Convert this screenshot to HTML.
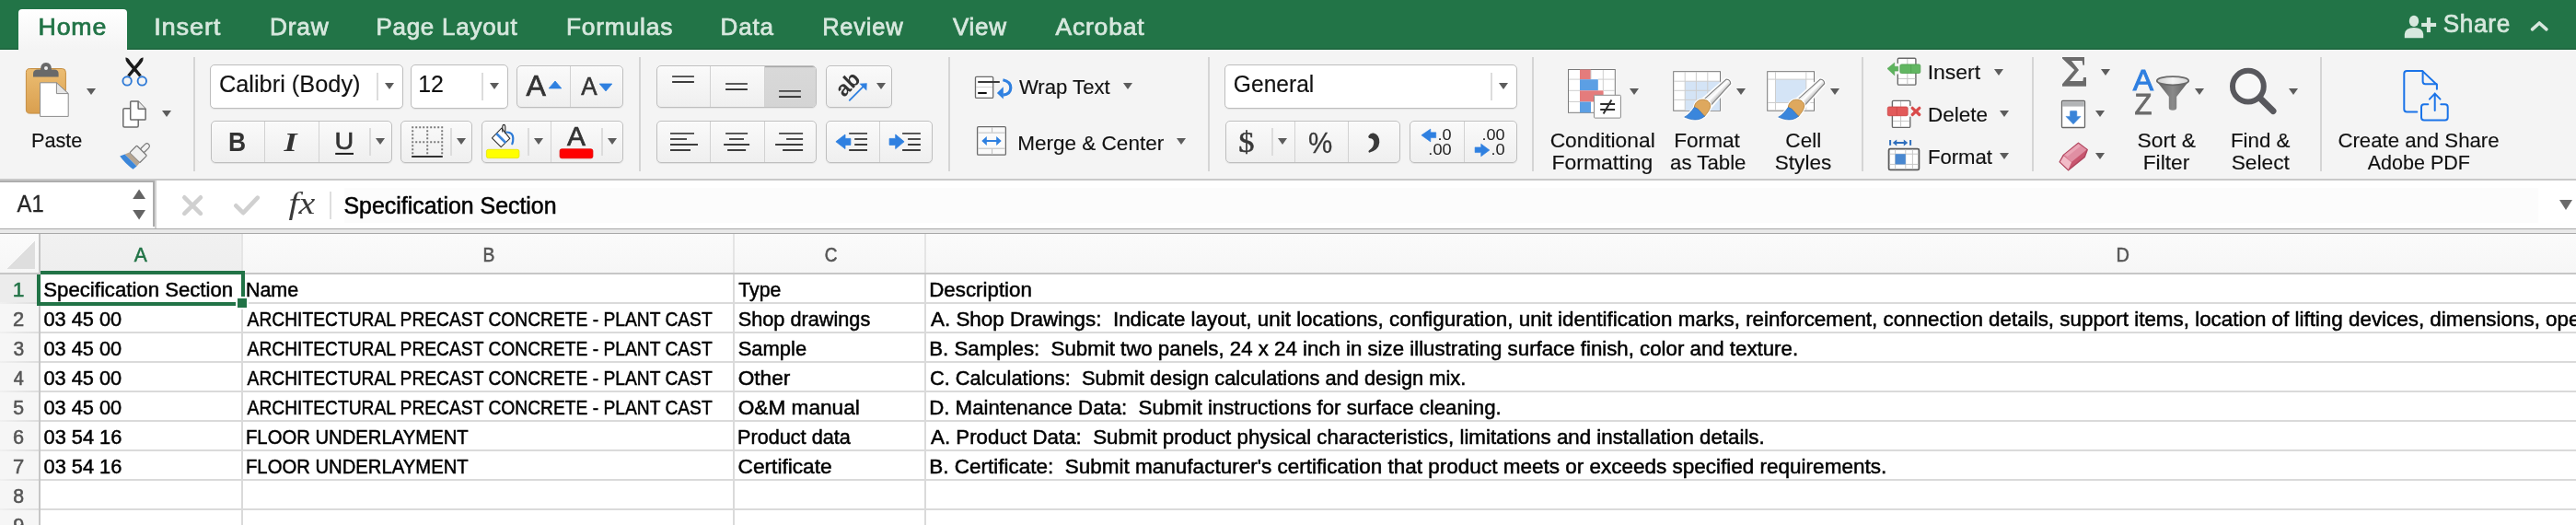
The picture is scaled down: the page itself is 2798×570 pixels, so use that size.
<!DOCTYPE html>
<html><head><meta charset="utf-8">
<style>
*{box-sizing:border-box;margin:0;padding:0}
html,body{width:2798px;height:570px;overflow:hidden;background:#fff;font-family:"Liberation Sans",sans-serif;position:relative}
.a{position:absolute}
.sep{position:absolute;width:2px;background:#d5d5d5;top:62px;height:124px}
.grp{position:absolute;border:1px solid #bebebe;border-radius:5px;background:linear-gradient(#fafafa,#efefef);box-shadow:inset 0 1px 0 #fff,0 1px 1px rgba(0,0,0,0.07)}
.dd{position:absolute;border:1px solid #bdbdbd;border-radius:5px;background:#fff;box-shadow:0 1px 1px rgba(0,0,0,0.07)}
.dv{position:absolute;top:0;bottom:0;width:1px;background:#d2d2d2}
.is{position:absolute;width:2px;background:#dcdcdc}
.ar{position:absolute;width:0;height:0;border-left:5px solid transparent;border-right:5px solid transparent;border-top:7px solid #5c5c5c}
.gl{position:absolute;background:#dadada}
</style></head><body>

<!-- green title/tab bar -->
<div class="a" style="left:0;top:0;width:2798px;height:54px;background:#227447"></div>
<div class="a" style="left:0;top:52px;width:2798px;height:2px;background:#1f6a41"></div>
<div class="a" style="left:20px;top:10px;width:118px;height:44px;background:linear-gradient(#ffffff,#f4f4f4);border-radius:4px 4px 0 0"></div>

<!-- ribbon -->
<div class="a" style="left:0;top:54px;width:2798px;height:140px;background:#f4f4f4"></div>
<div class="a" style="left:0;top:194px;width:2798px;height:2px;background:#c9c9c9"></div>
<div class="sep" style="left:210px"></div>
<div class="sep" style="left:694px"></div>
<div class="sep" style="left:1030px"></div>
<div class="sep" style="left:1312px"></div>
<div class="sep" style="left:1664px"></div>
<div class="sep" style="left:2022px"></div>
<div class="sep" style="left:2207px"></div>
<div class="sep" style="left:2520px"></div>

<div class="ar" style="left:94px;top:96px"></div>
<div class="ar" style="left:176px;top:120px"></div>
<!-- font group -->
<div class="dd" style="left:228px;top:70px;width:210px;height:48px"><div class="is" style="left:180px;top:8px;height:30px"></div></div>
<div class="ar" style="left:418px;top:90px"></div>
<div class="dd" style="left:446px;top:70px;width:106px;height:48px"><div class="is" style="left:76px;top:8px;height:30px"></div></div>
<div class="ar" style="left:532px;top:90px"></div>
<div class="grp" style="left:561px;top:71px;width:116px;height:46px"><div class="dv" style="left:57px"></div></div>

<div class="grp" style="left:229px;top:131px;width:197px;height:46px"><div class="dv" style="left:57px"></div><div class="dv" style="left:116px"></div><div class="is" style="left:171px;top:7px;height:30px"></div></div>
<div class="ar" style="left:408px;top:150px"></div>
<div class="grp" style="left:435px;top:131px;width:78px;height:46px"><div class="is" style="left:53px;top:7px;height:30px"></div></div>
<div class="ar" style="left:496px;top:150px"></div>
<div class="grp" style="left:523px;top:131px;width:154px;height:46px"><div class="is" style="left:49px;top:7px;height:30px"></div><div class="dv" style="left:74px"></div><div class="is" style="left:129px;top:7px;height:30px"></div></div>
<div class="ar" style="left:580px;top:150px"></div>
<div class="ar" style="left:660px;top:150px"></div>

<!-- alignment group -->
<div class="grp" style="left:713px;top:71px;width:174px;height:46px;overflow:hidden"><div class="a" style="left:116px;top:0;width:58px;height:46px;background:linear-gradient(#d9d9d9,#d4d4d4);box-shadow:inset 0 1px 1px rgba(0,0,0,0.25)"></div><div class="dv" style="left:57px"></div><div class="dv" style="left:116px"></div></div>
<div class="grp" style="left:897px;top:71px;width:72px;height:46px"></div>
<div class="ar" style="left:952px;top:90px"></div>
<div class="grp" style="left:713px;top:131px;width:174px;height:46px"><div class="dv" style="left:57px"></div><div class="dv" style="left:116px"></div></div>
<div class="grp" style="left:897px;top:131px;width:116px;height:46px"><div class="dv" style="left:57px"></div></div>

<div class="ar" style="left:1220px;top:90px"></div>
<div class="ar" style="left:1278px;top:150px"></div>

<!-- number group -->
<div class="dd" style="left:1330px;top:70px;width:318px;height:48px"><div class="is" style="left:288px;top:8px;height:30px"></div></div>
<div class="ar" style="left:1628px;top:90px"></div>
<div class="grp" style="left:1331px;top:131px;width:190px;height:46px"><div class="is" style="left:49px;top:7px;height:30px"></div><div class="dv" style="left:74px"></div><div class="dv" style="left:132px"></div></div>
<div class="ar" style="left:1388px;top:150px"></div>
<div class="grp" style="left:1531px;top:131px;width:117px;height:46px"><div class="dv" style="left:58px"></div></div>

<!-- styles group arrows -->
<div class="ar" style="left:1770px;top:96px"></div>
<div class="ar" style="left:1886px;top:96px"></div>
<div class="ar" style="left:1988px;top:96px"></div>
<!-- cells group arrows -->
<div class="ar" style="left:2166px;top:75px"></div>
<div class="ar" style="left:2172px;top:120px"></div>
<div class="ar" style="left:2172px;top:166px"></div>
<!-- editing arrows -->
<div class="ar" style="left:2282px;top:75px"></div>
<div class="ar" style="left:2276px;top:120px"></div>
<div class="ar" style="left:2276px;top:166px"></div>
<div class="ar" style="left:2384px;top:96px"></div>
<div class="ar" style="left:2486px;top:96px"></div>

<!-- formula bar -->
<div class="a" style="left:0;top:196px;width:2798px;height:52px;background:#fff"></div>
<div class="a" style="left:374px;top:204px;width:2383px;height:38px;background:#fcfcfc"></div>
<div class="a" style="left:166px;top:196px;width:2px;height:50px;background:#acacac"></div>
<div class="a" style="left:168px;top:196px;width:2px;height:52px;background:#d2d2d2"></div>
<div class="a" style="left:0;top:248px;width:2798px;height:1px;background:#a9a9a9"></div>
<div class="a" style="left:0;top:249px;width:2798px;height:4px;background:#e9e9e9"></div>
<div class="a" style="left:0;top:253px;width:2798px;height:1px;background:#a9a9a9"></div>
<div class="a" style="left:0;top:196px;width:166px;height:2px;background:#adadad"></div>
<div class="a" style="left:358px;top:208px;width:2px;height:30px;background:#dedede"></div>
<div class="a" style="left:2780px;top:217px;width:0;height:0;border-left:7px solid transparent;border-right:7px solid transparent;border-top:11px solid #6a6a6a"></div>

<!-- column headers -->
<div class="a" style="left:0;top:254px;width:2798px;height:42px;background:linear-gradient(#fbfbfb,#f6f6f6)"></div>
<div class="a" style="left:44px;top:254px;width:218px;height:42px;background:linear-gradient(#f1f1f1,#eeeeee)"></div>
<div class="a" style="left:262px;top:254px;width:2px;height:42px;background:#e5e5e5"></div>
<div class="a" style="left:796px;top:254px;width:2px;height:42px;background:#e5e5e5"></div>
<div class="a" style="left:1004px;top:254px;width:2px;height:42px;background:#e5e5e5"></div>
<div class="a" style="left:0;top:296px;width:2798px;height:2px;background:#c6c6c6"></div>
<div class="a" style="left:0;top:298px;width:42px;height:272px;background:#f6f6f6"></div>
<div class="a" style="left:0;top:298px;width:42px;height:30px;background:#ececec"></div>
<div class="a" style="left:42px;top:254px;width:2px;height:316px;background:#c6c6c6"></div>
<div class="a" style="left:8px;top:262px;width:30px;height:30px;background:linear-gradient(to bottom right,transparent 50%,#dedede 50%)"></div>

<!-- grid -->
<div class="gl" style="left:262px;top:298px;width:2px;height:272px"></div>
<div class="gl" style="left:796px;top:298px;width:2px;height:272px"></div>
<div class="gl" style="left:1004px;top:298px;width:2px;height:272px"></div>
<div class="gl" style="left:44px;top:328px;width:2754px;height:2px"></div>
<div class="gl" style="left:44px;top:360px;width:2754px;height:2px"></div>
<div class="gl" style="left:44px;top:392px;width:2754px;height:2px"></div>
<div class="gl" style="left:44px;top:424px;width:2754px;height:2px"></div>
<div class="gl" style="left:44px;top:456px;width:2754px;height:2px"></div>
<div class="gl" style="left:44px;top:488px;width:2754px;height:2px"></div>
<div class="gl" style="left:44px;top:520px;width:2754px;height:2px"></div>
<div class="gl" style="left:44px;top:552px;width:2754px;height:2px"></div>
<div class="a" style="left:0;top:328px;width:42px;height:2px;background:linear-gradient(to right,#f0f0f0,#dedede)"></div>
<div class="a" style="left:0;top:360px;width:42px;height:2px;background:linear-gradient(to right,#f0f0f0,#dedede)"></div>
<div class="a" style="left:0;top:392px;width:42px;height:2px;background:linear-gradient(to right,#f0f0f0,#dedede)"></div>
<div class="a" style="left:0;top:424px;width:42px;height:2px;background:linear-gradient(to right,#f0f0f0,#dedede)"></div>
<div class="a" style="left:0;top:456px;width:42px;height:2px;background:linear-gradient(to right,#f0f0f0,#dedede)"></div>
<div class="a" style="left:0;top:488px;width:42px;height:2px;background:linear-gradient(to right,#f0f0f0,#dedede)"></div>
<div class="a" style="left:0;top:520px;width:42px;height:2px;background:linear-gradient(to right,#f0f0f0,#dedede)"></div>
<div class="a" style="left:0;top:552px;width:42px;height:2px;background:linear-gradient(to right,#f0f0f0,#dedede)"></div>

<!-- selection -->
<div class="a" style="left:44px;top:294px;width:222px;height:4px;background:#217346"></div>
<div class="a" style="left:40px;top:298px;width:4px;height:34px;background:#217346"></div>
<div class="a" style="left:262px;top:294px;width:4px;height:28px;background:#217346"></div>
<div class="a" style="left:40px;top:328px;width:216px;height:4px;background:#217346"></div>
<div class="a" style="left:256px;top:322px;width:14px;height:14px;background:#fff"></div>
<div class="a" style="left:258px;top:324px;width:10px;height:10px;background:#217346"></div>

<svg class="a" style="left:0;top:0" width="2798" height="570">
<defs>
<linearGradient id="gClip" x1="0" y1="0" x2="0" y2="1"><stop offset="0" stop-color="#ecbd72"/><stop offset="1" stop-color="#d99f4f"/></linearGradient>
<linearGradient id="gFun" x1="0" y1="0" x2="1" y2="0"><stop offset="0" stop-color="#5e5e5e"/><stop offset="0.5" stop-color="#8a8a8a"/><stop offset="1" stop-color="#5e5e5e"/></linearGradient>
<linearGradient id="gEll" x1="0" y1="0" x2="1" y2="0"><stop offset="0" stop-color="#cfcfcf"/><stop offset="0.5" stop-color="#f4f4f4"/><stop offset="1" stop-color="#d6d6d6"/></linearGradient>
<linearGradient id="gHandleV" x1="0" y1="0" x2="0" y2="1"><stop offset="0" stop-color="#e8e8e8"/><stop offset="0.45" stop-color="#ffffff"/><stop offset="1" stop-color="#b5b5b5"/></linearGradient>
<linearGradient id="gHandle" x1="0" y1="0" x2="1" y2="0"><stop offset="0" stop-color="#bdbdbd"/><stop offset="0.5" stop-color="#fafafa"/><stop offset="1" stop-color="#c8c8c8"/></linearGradient>
</defs>

<!-- Share person icon + chevron -->
<g fill="#d7e8de">
<ellipse cx="2622" cy="22.9" rx="5.2" ry="6.1"/>
<path d="M2611.8,41.2 L2611.8,37 Q2612.5,30 2622,30 Q2631.5,30 2632.2,37 L2632.2,41.2 Z"/>
<rect x="2630.1" y="24.9" width="16" height="4.1"/>
<rect x="2635.9" y="19" width="4.1" height="16.1"/>
</g>
<polyline points="2750.5,31.8 2758.2,25 2765.9,31.8" fill="none" stroke="#d7e8de" stroke-width="3.6" stroke-linecap="round" stroke-linejoin="round"/>

<!-- Paste clipboard -->
<rect x="28.4" y="74.5" width="43" height="48.6" rx="4" fill="url(#gClip)" stroke="#c58d42" stroke-width="1"/>
<path d="M36,83.6 L36,80 Q36,75.5 41,75.5 L44,75.5 Q44,68 50,68 Q56,68 56,75.5 L59,75.5 Q63.6,75.5 63.6,80 L63.6,83.6 Z" fill="#696969"/>
<circle cx="50" cy="74" r="2" fill="#f0f0f0"/>
<path d="M43.6,89.8 L61.4,89.8 L74.2,101.6 L74.2,126.4 L43.6,126.4 Z" fill="#fff" stroke="#8a8a8a" stroke-width="1"/>
<path d="M61.4,89.8 L61.4,101.6 L74.2,101.6 Z" fill="#e6e6e6" stroke="#8a8a8a" stroke-width="1" stroke-linejoin="round"/>

<!-- Scissors -->
<path d="M136.3,62.6 Q139.5,62.5 141.5,66.5 L153.8,81.6 L151.2,83.6 L138.6,68.8 Q136,65.5 136.3,62.6 Z" fill="#1b1b1b"/>
<path d="M155.7,62.6 Q152.5,62.5 150.5,66.5 L138.2,81.6 L140.8,83.6 L153.4,68.8 Q156,65.5 155.7,62.6 Z" fill="#1b1b1b"/>
<circle cx="138.1" cy="87.9" r="4.7" fill="none" stroke="#2f7ad6" stroke-width="1.9"/>
<circle cx="154.3" cy="87.9" r="4.7" fill="none" stroke="#2f7ad6" stroke-width="1.9"/>

<!-- Copy -->
<rect x="133.8" y="117.7" width="16.4" height="20.4" rx="1.5" fill="#fff" stroke="#6b6b6b" stroke-width="1.5"/>
<path d="M142.8,109.9 L150.1,109.9 L158.1,118.2 L158.1,129.3 Q158.1,130.1 157.3,130.1 L142.5,130.1 Q141.7,130.1 141.7,129.3 L141.7,110.7 Q141.7,109.9 142.5,109.9 Z" fill="#fff" stroke="#6b6b6b" stroke-width="1.5"/>
<path d="M150.1,109.9 L150.1,117.4 Q150.1,118.2 150.9,118.2 L158.1,118.2" fill="#ececec" stroke="#6b6b6b" stroke-width="1.5"/>

<!-- Format painter -->
<g transform="translate(147.6,168.4) rotate(45)">
<rect x="-1.3" y="-18.2" width="5.6" height="11.5" rx="2.8" fill="#f2f2f2" stroke="#7a7a7a" stroke-width="1.2"/>
<rect x="-6.6" y="-8" width="15.4" height="11" rx="1" fill="#f0f0f0" stroke="#7a7a7a" stroke-width="1.2"/>
<path d="M-7.2,3 L8.8,3 L9.2,7.8 L-9.2,7.8 Z" fill="#b5a592"/>
<path d="M-9.2,7.8 L9.2,7.8 L8.6,13 Q-2,14.6 -11.6,13 Z" fill="#3b86d9"/>
</g>
<!-- Grow / shrink triangles -->
<path d="M596.2,95.9 L603,88 L609.8,95.9 Z" fill="#2f80e0" stroke="#2f80e0" stroke-width="0.8" stroke-linejoin="round"/>
<path d="M651.2,91 L664.8,91 L658,98.9 Z" fill="#2f80e0" stroke="#2f80e0" stroke-width="0.8" stroke-linejoin="round"/>

<!-- underline bar -->
<rect x="364.2" y="165.9" width="19.8" height="2" fill="#1c1c1c"/>

<!-- borders icon -->
<g fill="#7a7a7a">
<path d="M447.2,137.2 h2 v2 h-2z M451.2,137.2 h2 v2 h-2z M455.2,137.2 h2 v2 h-2z M459.2,137.2 h2 v2 h-2z M463.2,137.2 h2 v2 h-2z M467.2,137.2 h2 v2 h-2z M471.2,137.2 h2 v2 h-2z M475.2,137.2 h2 v2 h-2z M479.2,137.2 h2 v2 h-2z"/>
<path d="M447.2,153.2 h2 v2 h-2z M451.2,153.2 h2 v2 h-2z M455.2,153.2 h2 v2 h-2z M459.2,153.2 h2 v2 h-2z M463.2,153.2 h2 v2 h-2z M467.2,153.2 h2 v2 h-2z M471.2,153.2 h2 v2 h-2z M475.2,153.2 h2 v2 h-2z M479.2,153.2 h2 v2 h-2z"/>
<path d="M447.2,141.2 h2 v2 h-2z M447.2,145.2 h2 v2 h-2z M447.2,149.2 h2 v2 h-2z M447.2,157.2 h2 v2 h-2z M447.2,161.2 h2 v2 h-2z M447.2,165.2 h2 v2 h-2z"/>
<path d="M463.2,141.2 h2 v2 h-2z M463.2,145.2 h2 v2 h-2z M463.2,149.2 h2 v2 h-2z M463.2,157.2 h2 v2 h-2z M463.2,161.2 h2 v2 h-2z M463.2,165.2 h2 v2 h-2z"/>
<path d="M479.2,141.2 h2 v2 h-2z M479.2,145.2 h2 v2 h-2z M479.2,149.2 h2 v2 h-2z M479.2,157.2 h2 v2 h-2z M479.2,161.2 h2 v2 h-2z M479.2,165.2 h2 v2 h-2z"/>
</g>
<rect x="447.1" y="169.1" width="33.7" height="1.8" fill="#1c1c1c"/>

<!-- fill bucket -->
<path d="M544.8,139.2 L553.8,150.4 L544.2,159.6 L534.4,149.8 Z" fill="#fff" stroke="#333" stroke-width="1.1" stroke-linejoin="round"/>
<path d="M539.2,145 L549.3,155" stroke="#3b86dc" stroke-width="2.6"/>
<path d="M545.8,143.6 L545.8,137.5 Q545.8,135.4 547.3,135.4 Q548.8,135.4 548.8,137.5 L548.8,145" fill="none" stroke="#222" stroke-width="1.1"/>
<path d="M550.5,143.5 Q557.2,143.8 557.3,150 Q557.4,154 556.3,156.2" fill="none" stroke="#2e7bd6" stroke-width="2.2" stroke-linecap="round"/>
<rect x="528.4" y="162.3" width="35.5" height="9.3" rx="2" fill="#ffff00" stroke="#e3e300" stroke-width="0.8"/>
<rect x="608.1" y="161.8" width="35.8" height="10" rx="2" fill="#ff0000" stroke="#e00000" stroke-width="0.8"/>

<!-- alignment lines -->
<g fill="#2a2a2a">
<rect x="730.1" y="82.2" width="23.8" height="1.8" fill="#4a4a4a"/><rect x="730.1" y="88.1" width="23.8" height="1.8"/>
<rect x="788.1" y="90.1" width="23.8" height="1.8" fill="#4a4a4a"/><rect x="788.1" y="96.2" width="23.8" height="1.8"/>
<rect x="846.1" y="98" width="23.8" height="1.8" fill="#4a4a4a"/><rect x="846.1" y="104.2" width="23.8" height="1.8"/>

<rect x="728" y="144" width="26" height="1.8" fill="#4a4a4a"/><rect x="728" y="150.1" width="18" height="1.8" fill="#3a3a3a"/><rect x="728" y="156.1" width="30" height="1.8"/><rect x="728" y="162.1" width="22" height="1.8"/>
<rect x="788.1" y="144" width="24" height="1.8" fill="#4a4a4a"/><rect x="792" y="150.1" width="16" height="1.8" fill="#3a3a3a"/><rect x="786.1" y="156.1" width="28" height="1.8"/><rect x="790.1" y="162.1" width="20" height="1.8"/>
<rect x="846.1" y="144" width="26" height="1.8" fill="#4a4a4a"/><rect x="854.1" y="150.1" width="18" height="1.8" fill="#3a3a3a"/><rect x="842.1" y="156.1" width="30" height="1.8"/><rect x="850.1" y="162.1" width="22" height="1.8"/>

<rect x="922.2" y="144" width="19.8" height="1.8" fill="#4a4a4a"/><rect x="928.2" y="150.1" width="13.8" height="1.8" fill="#3a3a3a"/><rect x="928.2" y="156.1" width="13.8" height="1.8"/><rect x="922.2" y="162.1" width="19.8" height="1.8"/>
<rect x="980.1" y="144" width="19.8" height="1.8" fill="#4a4a4a"/><rect x="986.1" y="150.1" width="13.8" height="1.8" fill="#3a3a3a"/><rect x="986.1" y="156.1" width="13.8" height="1.8"/><rect x="980.1" y="162.1" width="19.8" height="1.8"/>
</g>
<!-- indent arrows -->
<path d="M907.9,153.8 L918,146 L918,150.4 L923.9,150.4 L923.9,157.4 L918,157.4 L918,161.6 Z" fill="#2f80e0" stroke="#2f80e0" stroke-width="0.8" stroke-linejoin="round"/>
<path d="M982.1,153.8 L972.7,146 L972.7,150.4 L966.1,150.4 L966.1,157.4 L972.7,157.4 L972.7,161.6 Z" fill="#2f80e0" stroke="#2f80e0" stroke-width="0.8" stroke-linejoin="round"/>
<!-- orientation arrow -->
<path d="M922.8,108.8 L939,92.6" stroke="#2f80e0" stroke-width="1.9" stroke-linecap="round"/>
<path d="M941.7,90.3 L941.3,98.6 L933.4,90.7 Z" fill="#2f80e0"/>

<!-- wrap text icon -->
<rect x="1059.5" y="83.4" width="19.2" height="23" rx="1.2" fill="#fff" stroke="#6a6a6a" stroke-width="1.3"/>
<rect x="1060.2" y="94.2" width="17.8" height="0.9" fill="#c8c8c8"/>
<rect x="1062.2" y="88" width="23.6" height="2" fill="#3a3a3a"/>
<rect x="1062.2" y="100" width="9.5" height="2" fill="#111"/>
<path d="M1089.4,86.8 Q1097.8,88.5 1097.8,95.5 Q1097.5,102.5 1089.5,103.2" fill="none" stroke="#2f80e0" stroke-width="3.2"/>
<path d="M1082.9,101 L1089.8,94.2 L1089.8,107.5 Z" fill="#2f80e0"/>

<!-- merge icon -->
<rect x="1061.6" y="137.6" width="30.8" height="30.6" rx="1.2" fill="#fafafa" stroke="#6a6a6a" stroke-width="1.3"/>
<rect x="1062.2" y="143.6" width="29.6" height="1" fill="#bdbdbd"/>
<rect x="1062.2" y="160.7" width="29.6" height="1" fill="#bdbdbd"/>
<rect x="1077.1" y="138.2" width="1" height="5.5" fill="#bdbdbd"/>
<rect x="1077.1" y="161.5" width="1" height="6.2" fill="#bdbdbd"/>
<path d="M1066.3,153 L1071.8,148 L1071.8,152 L1082.2,152 L1082.2,148 L1087.7,153 L1082.2,158 L1082.2,154 L1071.8,154 L1071.8,158 Z" fill="#2f80e0"/>

<!-- comma -->
<path d="M1486.5,147.5 Q1488.5,144 1492,144.6 Q1498.6,146.5 1498.3,154.8 Q1497.6,163 1487.2,165.7 Q1485.8,165.2 1486.8,163.6 Q1493,159.5 1492.2,153.5 Q1491.5,150.5 1488.4,150.2 Q1485.6,149.8 1486.5,147.5 Z" fill="#3a3a3a"/>
<!-- decimal arrows -->
<path d="M1543.9,146.8 L1553.8,140.1 L1553.8,143.8 L1559.7,143.8 L1559.7,149.6 L1553.8,149.6 L1553.8,153.9 Z" fill="#2f80e0" stroke="#2f80e0" stroke-width="0.6" stroke-linejoin="round"/>
<path d="M1617.9,163 L1608.7,156.2 L1608.7,159.9 L1602.1,159.9 L1602.1,165.6 L1608.7,165.6 L1608.7,169.8 Z" fill="#2f80e0" stroke="#2f80e0" stroke-width="0.6" stroke-linejoin="round"/>

<!-- conditional formatting -->
<rect x="1703.5" y="75.5" width="50.8" height="46.8" fill="#fff" stroke="#7a7a7a" stroke-width="1"/>
<rect x="1716" y="75.5" width="12" height="10.8" fill="#e47c7c"/>
<rect x="1716" y="86.2" width="19.8" height="12.1" fill="#5c9fe4"/>
<rect x="1716" y="98.3" width="25.6" height="12.2" fill="#e47c7c"/>
<rect x="1716" y="110.5" width="12" height="11.8" fill="#5c9fe4"/>
<g stroke="#cfcfcf" stroke-width="1">
<line x1="1704" y1="86.1" x2="1716" y2="86.1"/><line x1="1735.8" y1="86.1" x2="1754" y2="86.1"/>
<line x1="1704" y1="98.3" x2="1716" y2="98.3"/><line x1="1741.6" y1="98.3" x2="1754" y2="98.3"/>
<line x1="1704" y1="110.5" x2="1716" y2="110.5"/><line x1="1741.6" y1="110.5" x2="1754" y2="110.5"/>
<line x1="1728" y1="76" x2="1728" y2="86"/><line x1="1741.3" y1="76" x2="1741.3" y2="98"/>
</g>
<rect x="1731.5" y="103.3" width="28.9" height="24.8" rx="1" fill="#fff" stroke="#8a8a8a" stroke-width="1"/>
<g stroke="#2e2e2e" stroke-width="2">
<line x1="1738.2" y1="113" x2="1754.1" y2="113"/><line x1="1738.2" y1="119" x2="1754.1" y2="119"/>
<line x1="1750.4" y1="108.4" x2="1741.6" y2="123.6"/>
</g>

<!-- format as table -->
<rect x="1817.7" y="77.7" width="50.8" height="42.5" fill="#fff" stroke="#777" stroke-width="1"/>
<rect x="1830.2" y="88.2" width="38" height="31.8" fill="#d4e4f6"/>
<g stroke="#cdcdcd" stroke-width="1">
<line x1="1830.2" y1="78" x2="1830.2" y2="120"/><line x1="1842.4" y1="78" x2="1842.4" y2="120"/><line x1="1854.8" y1="78" x2="1854.8" y2="120"/>
<line x1="1818" y1="88.2" x2="1868" y2="88.2"/><line x1="1818" y1="98.3" x2="1868" y2="98.3"/><line x1="1818" y1="108.4" x2="1868" y2="108.4"/>
</g>
<!-- cell styles -->
<rect x="1919.7" y="77.7" width="50.8" height="42.5" fill="#fff" stroke="#777" stroke-width="1"/>
<rect x="1928.5" y="86.1" width="33.3" height="25.4" fill="#d4e4f6"/>
<g stroke="#cdcdcd" stroke-width="1">
<line x1="1928.5" y1="78" x2="1928.5" y2="120"/><line x1="1961.8" y1="78" x2="1961.8" y2="120"/>
<line x1="1920" y1="86.1" x2="1970" y2="86.1"/><line x1="1920" y1="111.5" x2="1970" y2="111.5"/>
</g>
<g id="brush">
<g transform="translate(1849.5,116.3) rotate(-45)">
<path d="M3,-7.8 L40,-5.4 Q45.2,0 40,5.4 L3,7.8 Z" fill="#fff" opacity="0.9"/>
<path d="M5,-5 L39.5,-3.3 Q42.3,0 39.5,3.3 L5,5 Z" fill="url(#gHandleV)" stroke="#7d7d7d" stroke-width="1"/>
</g>
<path d="M1838.8,116.8 C1839.5,110 1844.5,106.6 1849.2,106.6 C1855,106.5 1859.3,110.5 1859.3,114.6 C1859.3,119.5 1855.5,124.5 1852.6,127.6 L1843,131.5 L1828,128.5 Z" fill="#fff" opacity="0.9"/>
<path d="M1840.3,116.5 C1841,111 1845,108.2 1849.2,108.2 C1854,108 1857.7,111 1857.7,114.6 C1857.7,119 1854,123 1851.6,126.2 C1848,124 1846,118 1840.3,116.5 Z" fill="#dea85e" stroke="#b98338" stroke-width="0.9"/>
<path d="M1840.3,116.5 C1846,118 1848,124 1851.6,126.2 C1848,129 1845,130 1841.2,129.9 C1837,130 1833,128.5 1829.7,127.1 C1834,125 1838,120 1840.3,116.5 Z" fill="#3a86dc" stroke="#2a6fc0" stroke-width="0.7"/>
</g>
<use href="#brush" x="102" y="0"/>

<!-- insert cells icon -->
<rect x="2061.3" y="63.3" width="19.6" height="28.8" rx="1.2" fill="#fff" stroke="#6a6a6a" stroke-width="1.4"/>
<line x1="2071.8" y1="64" x2="2071.8" y2="91.5" stroke="#c4c4c4" stroke-width="1"/>
<line x1="2062" y1="85.4" x2="2080.3" y2="85.4" stroke="#c4c4c4" stroke-width="1"/>
<rect x="2059.8" y="68.9" width="4.2" height="11.6" fill="#f4f4f4"/>
<rect x="2063.9" y="69.9" width="21.9" height="9.6" rx="1.5" fill="#62b662" stroke="#4f9f4f" stroke-width="0.8"/>
<line x1="2075.7" y1="70" x2="2075.7" y2="79.4" stroke="#4f9f4f" stroke-width="0.8"/>
<path d="M2050,74.4 L2057.7,68.2 L2057.7,72.3 L2061.7,72.3 L2061.7,77.1 L2057.7,77.1 L2057.7,81.8 Z" fill="#5cb35c" stroke="#4f9f4f" stroke-width="0.6" stroke-linejoin="round"/>
<!-- delete cells icon -->
<rect x="2055.4" y="109.4" width="19.4" height="29" rx="1.2" fill="#fff" stroke="#6a6a6a" stroke-width="1.4"/>
<line x1="2064.6" y1="110" x2="2064.6" y2="138" stroke="#c4c4c4" stroke-width="1"/>
<line x1="2056" y1="131.4" x2="2074.2" y2="131.4" stroke="#c4c4c4" stroke-width="1"/>
<rect x="2072.1" y="115" width="3.8" height="11.7" fill="#f4f4f4"/>
<rect x="2050.3" y="116" width="21.8" height="9.7" rx="1.5" fill="#e25a5a" stroke="#c94444" stroke-width="0.8"/>
<line x1="2060.3" y1="116.2" x2="2060.3" y2="125.5" stroke="#c94444" stroke-width="0.8"/>
<path d="M2077.2,117.3 L2084.8,124.5 M2084.8,117.3 L2077.2,124.5" stroke="#d94a4a" stroke-width="3.2" stroke-linecap="round"/>
<!-- format cells icon -->
<rect x="2051.6" y="161.6" width="32.8" height="22.8" rx="1.5" fill="#fff" stroke="#5a5a5a" stroke-width="1.8"/>
<g stroke="#c8c8c8" stroke-width="1">
<line x1="2058.6" y1="162.5" x2="2058.6" y2="183.5"/><line x1="2069.8" y1="162.5" x2="2069.8" y2="183.5"/><line x1="2077.4" y1="162.5" x2="2077.4" y2="183.5"/>
<line x1="2052.5" y1="167.2" x2="2083.5" y2="167.2"/><line x1="2052.5" y1="178.4" x2="2083.5" y2="178.4"/>
</g>
<rect x="2058.6" y="167.2" width="11.2" height="11.2" fill="#4a88d0"/>
<g fill="#2f6fbd">
<rect x="2052.1" y="152" width="2" height="5.8"/><rect x="2074.1" y="152" width="2" height="5.8"/>
<path d="M2055.8,155 L2060.2,151.4 L2060.2,154.1 L2067.8,154.1 L2067.8,151.4 L2072.2,155 L2067.8,158.6 L2067.8,155.9 L2060.2,155.9 L2060.2,158.6 Z"/>
</g>

<!-- sigma -->
<path d="M2240,62 L2264,62 L2264,70.8 L2262.4,70.8 L2261.6,66 L2250,66 L2258,76 L2248,88 L2262.4,88 L2263,84 L2266,84 L2266,93.8 L2240,93.8 L2240,91.2 L2253.2,76 L2240,63.6 Z" fill="#6b6b6b"/>
<!-- fill down -->
<rect x="2239.5" y="109.5" width="25" height="29" rx="1" fill="#fff" stroke="#666" stroke-width="1.3"/>
<rect x="2240.2" y="110.2" width="23.6" height="5.4" fill="#b2b4b6"/>
<path d="M2248.5,121 Q2248.5,120.4 2249.2,120.4 L2255,120.4 Q2255.8,120.4 2255.8,121 L2255.8,126.4 L2260,126.4 L2252,134.8 L2244,126.4 L2248.5,126.4 Z" fill="#3a84d8" stroke="#3a84d8" stroke-width="0.6" stroke-linejoin="round"/>
<!-- eraser -->
<path d="M2237.2,175.8 L2241.2,168.6 L2257.5,155.3 L2267.2,162.6 L2264.3,170.3 L2246.6,184.6 Z" fill="#c8566f" stroke="#b0465f" stroke-width="1.5" stroke-linejoin="round"/>
<path d="M2241.6,168.6 L2257.5,155.8 L2266.5,162.6 L2250,176 Z" fill="#e08fa3"/>
<path d="M2243,168 L2257.5,156.5 L2260,158.4 L2245.5,170 Z" fill="#eaa6b6"/>
<path d="M2237.8,175.8 L2241.6,169.2 L2250,176.3 L2246.6,184 Z" fill="#f2bcc8"/>
<!-- funnel -->
<path d="M2342.4,88 L2377.5,88 L2364.2,105 L2364.2,117 Q2364.2,119.7 2360,119.7 Q2355.8,119.7 2355.8,117 L2355.8,105 Z" fill="url(#gFun)"/>
<ellipse cx="2360" cy="87.7" rx="17.2" ry="4.6" fill="url(#gEll)" stroke="#6a6a6a" stroke-width="1.8"/>

<!-- magnifier -->
<circle cx="2441.9" cy="93.7" r="16.9" fill="#f8f8f8" stroke="#58585d" stroke-width="6"/>
<line x1="2456.5" y1="108.2" x2="2469" y2="120.5" stroke="#58585d" stroke-width="7" stroke-linecap="round"/>

<!-- pdf icon -->
<g fill="none" stroke="#1a73e8" stroke-width="2" stroke-linecap="round" stroke-linejoin="round">
<path d="M2625.3,121.6 L2614.3,121.6 Q2611.3,121.6 2611.3,118.6 L2611.3,80.1 Q2611.3,77.1 2614.3,77.1 L2631.3,77.1 L2646.9,92 L2646.9,96.7"/>
<path d="M2631.6,77.4 L2631.6,88.6 Q2631.6,91.3 2634.3,91.3 L2646.6,91.3"/>
<path d="M2637.3,113.3 L2633,113.3 Q2630,113.3 2630,116.3 L2630,127.4 Q2630,130.4 2633,130.4 L2655.7,130.4 Q2658.7,130.4 2658.7,127.4 L2658.7,116.3 Q2658.7,113.3 2655.7,113.3 L2651.3,113.3"/>
<path d="M2644.7,120 L2644.7,101.6 M2638.9,107.6 L2644.7,101.6 L2650.5,107.6"/>
</g>

<!-- formula bar icons -->
<path d="M144.2,216 L151.1,205.5 L158,216 Z" fill="#646464"/>
<path d="M144.2,228 L151.1,238.4 L158,228 Z" fill="#646464"/>
<path d="M200.3,214.3 L217.9,231.9 M217.9,214.3 L200.3,231.9" stroke="#d0d0d0" stroke-width="4.6" stroke-linecap="round"/>
<path d="M256.3,223.3 L264.2,231.2 L279.8,214.6" fill="none" stroke="#d0d0d0" stroke-width="4.6" stroke-linecap="round" stroke-linejoin="round"/>
</svg>

<svg class="a" style="left:0;top:0;will-change:transform" width="2798" height="570" font-family="Liberation Sans">
<text letter-spacing="0.8" transform="matrix(1.0052 0 0 1 41.56 38.00)" font-size="26.60" fill="#217346" stroke="#217346" stroke-width="0.75" xml:space="preserve">Home</text>
<text letter-spacing="0.8" transform="matrix(1.0227 0 0 1 167.25 38.00)" font-size="26.60" fill="#d7e8de" stroke="#d7e8de" stroke-width="0.75" xml:space="preserve">Insert</text>
<text letter-spacing="0.8" transform="matrix(0.9885 0 0 1 293.00 38.00)" font-size="26.60" fill="#d7e8de" stroke="#d7e8de" stroke-width="0.75" xml:space="preserve">Draw</text>
<text letter-spacing="0.8" transform="matrix(0.9744 0 0 1 408.43 38.00)" font-size="26.60" fill="#d7e8de" stroke="#d7e8de" stroke-width="0.75" xml:space="preserve">Page Layout</text>
<text letter-spacing="0.8" transform="matrix(0.9921 0 0 1 614.89 38.00)" font-size="26.60" fill="#d7e8de" stroke="#d7e8de" stroke-width="0.75" xml:space="preserve">Formulas</text>
<text letter-spacing="0.8" transform="matrix(0.9777 0 0 1 782.62 38.00)" font-size="26.60" fill="#d7e8de" stroke="#d7e8de" stroke-width="0.75" xml:space="preserve">Data</text>
<text letter-spacing="0.8" transform="matrix(0.9600 0 0 1 893.16 38.00)" font-size="26.60" fill="#d7e8de" stroke="#d7e8de" stroke-width="0.75" xml:space="preserve">Review</text>
<text letter-spacing="0.8" transform="matrix(0.9774 0 0 1 1034.90 38.00)" font-size="26.60" fill="#d7e8de" stroke="#d7e8de" stroke-width="0.75" xml:space="preserve">View</text>
<text letter-spacing="0.8" transform="matrix(0.9959 0 0 1 1146.50 38.00)" font-size="26.60" fill="#d7e8de" stroke="#d7e8de" stroke-width="0.75" xml:space="preserve">Acrobat</text>
<text letter-spacing="0.8" transform="matrix(0.9453 0 0 1 2653.63 35.10)" font-size="27.60" fill="#d7e8de" stroke="#d7e8de" stroke-width="0.75" xml:space="preserve">Share</text>
<text transform="matrix(1.0007 0 0 1 33.96 159.80)" font-size="21.70" fill="#111" stroke="#111" stroke-width="0.15" xml:space="preserve">Paste</text>
<text transform="matrix(1.0187 0 0 1 237.93 99.90)" font-size="24.90" fill="#111" stroke="#111" stroke-width="0.15" xml:space="preserve">Calibri (Body)</text>
<text transform="matrix(1.0008 0 0 1 454.13 99.90)" font-size="24.90" fill="#111" stroke="#111" stroke-width="0.15" xml:space="preserve">12</text>
<text transform="matrix(1.0194 0 0 1 1106.90 101.80)" font-size="21.70" fill="#111" stroke="#111" stroke-width="0.15" xml:space="preserve">Wrap Text</text>
<text transform="matrix(1.0387 0 0 1 1105.20 162.70)" font-size="21.70" fill="#111" stroke="#111" stroke-width="0.15" xml:space="preserve">Merge &amp; Center</text>
<text transform="matrix(0.9873 0 0 1 1339.87 99.90)" font-size="24.90" fill="#111" stroke="#111" stroke-width="0.15" xml:space="preserve">General</text>
<text transform="matrix(1.0505 0 0 1 1683.66 160.00)" font-size="21.70" fill="#111" stroke="#111" stroke-width="0.15" xml:space="preserve">Conditional</text>
<text transform="matrix(1.0581 0 0 1 1685.56 184.00)" font-size="21.70" fill="#111" stroke="#111" stroke-width="0.15" xml:space="preserve">Formatting</text>
<text transform="matrix(1.0444 0 0 1 1818.19 160.00)" font-size="21.70" fill="#111" stroke="#111" stroke-width="0.15" xml:space="preserve">Format</text>
<text transform="matrix(1.0245 0 0 1 1814.11 184.00)" font-size="21.70" fill="#111" stroke="#111" stroke-width="0.15" xml:space="preserve">as Table</text>
<text transform="matrix(1.0387 0 0 1 1939.37 160.00)" font-size="21.70" fill="#111" stroke="#111" stroke-width="0.15" xml:space="preserve">Cell</text>
<text transform="matrix(1.0409 0 0 1 1927.78 184.00)" font-size="21.70" fill="#111" stroke="#111" stroke-width="0.15" xml:space="preserve">Styles</text>
<text transform="matrix(1.0582 0 0 1 2093.63 86.00)" font-size="21.70" fill="#111" stroke="#111" stroke-width="0.15" xml:space="preserve">Insert</text>
<text transform="matrix(1.0366 0 0 1 2093.90 132.00)" font-size="21.70" fill="#111" stroke="#111" stroke-width="0.15" xml:space="preserve">Delete</text>
<text transform="matrix(1.0205 0 0 1 2093.93 177.90)" font-size="21.70" fill="#111" stroke="#111" stroke-width="0.15" xml:space="preserve">Format</text>
<text transform="matrix(1.0531 0 0 1 2321.47 160.00)" font-size="21.70" fill="#111" stroke="#111" stroke-width="0.15" xml:space="preserve">Sort &amp;</text>
<text transform="matrix(1.0497 0 0 1 2327.68 184.00)" font-size="21.70" fill="#111" stroke="#111" stroke-width="0.15" xml:space="preserve">Filter</text>
<text transform="matrix(1.0310 0 0 1 2422.91 160.00)" font-size="21.70" fill="#111" stroke="#111" stroke-width="0.15" xml:space="preserve">Find &amp;</text>
<text transform="matrix(1.0477 0 0 1 2423.68 184.00)" font-size="21.70" fill="#111" stroke="#111" stroke-width="0.15" xml:space="preserve">Select</text>
<text transform="matrix(1.0235 0 0 1 2539.39 160.00)" font-size="21.70" fill="#111" stroke="#111" stroke-width="0.15" xml:space="preserve">Create and Share</text>
<text transform="matrix(0.9919 0 0 1 2571.70 184.00)" font-size="21.70" fill="#111" stroke="#111" stroke-width="0.15" xml:space="preserve">Adobe PDF</text>
<text transform="matrix(1.0187 0 0 1 571.40 103.80)" font-size="31.50" fill="#333" stroke="#333" stroke-width="0.7" xml:space="preserve">A</text>
<text transform="matrix(0.9690 0 0 1 631.20 103.30)" font-size="26.80" fill="#333" stroke="#333" stroke-width="0.6" xml:space="preserve">A</text>
<text transform="matrix(0.9139 0 0 1 248.08 163.80)" font-size="29.00" font-weight="bold" fill="#333" xml:space="preserve">B</text>
<text transform="matrix(1.2510 0 0 1 308.56 163.80)" font-size="29.00" font-weight="bold" font-style="italic" font-family="Liberation Serif" fill="#333" xml:space="preserve">I</text>
<text transform="matrix(1.0857 0 0 1 363.44 162.20)" font-size="26.50" fill="#333" stroke="#333" stroke-width="0.6" xml:space="preserve">U</text>
<text transform="matrix(1.0153 0 0 1 616.00 157.90)" font-size="29.40" fill="#333" stroke="#333" stroke-width="0.7" xml:space="preserve">A</text>
<text transform="matrix(1.1103 0 0 1 1345.32 164.80)" font-size="31.00" font-family="Liberation Serif" fill="#383838" stroke="#383838" stroke-width="0.5" xml:space="preserve">$</text>
<text transform="matrix(0.9223 0 0 1 1420.97 165.90)" font-size="32.00" fill="#383838" stroke="#383838" stroke-width="0.3" xml:space="preserve">%</text>
<text transform="matrix(1.0637 0 0 1 1561.57 151.80)" font-size="17.00" fill="#222" xml:space="preserve">.0</text>
<text transform="matrix(1.0704 0 0 1 1551.36 167.90)" font-size="17.00" fill="#222" xml:space="preserve">.00</text>
<text transform="matrix(1.0611 0 0 1 1609.58 151.80)" font-size="17.00" fill="#222" xml:space="preserve">.00</text>
<text transform="matrix(1.0720 0 0 1 1619.46 167.90)" font-size="17.00" fill="#222" xml:space="preserve">.0</text>
<text transform="matrix(1.0785 0 0 1 2316.80 97.60)" font-size="31.00" fill="#2f7fe0" stroke="#2f7fe0" stroke-width="0.9" xml:space="preserve">A</text>
<text transform="matrix(0.9971 0 0 1 2318.57 123.80)" font-size="31.00" fill="#6b6b6b" stroke="#6b6b6b" stroke-width="0.9" xml:space="preserve">Z</text>
<text transform="matrix(1.2116 0 0 1 313.40 231.70)" font-size="33.00" font-style="italic" font-family="Liberation Serif" fill="#3a3a3a" xml:space="preserve">fx</text>
<text transform="matrix(0.9150 0 0 1 18.60 230.40)" font-size="26.00" fill="#262626" stroke="#262626" stroke-width="0.3" xml:space="preserve">A1</text>
<text transform="matrix(0.9769 0 0 1 373.48 232.10)" font-size="25.50" fill="#000" stroke="#000" stroke-width="0.55" xml:space="preserve">Specification Section</text>
<text transform="matrix(0.9566 0 0 1 145.80 283.70)" font-size="22.00" fill="#217346" stroke="#217346" stroke-width="0.55" xml:space="preserve">A</text>
<text transform="matrix(0.8751 0 0 1 524.46 283.70)" font-size="22.00" fill="#555" stroke="#555" stroke-width="0.55" xml:space="preserve">B</text>
<text transform="matrix(0.8661 0 0 1 895.85 283.70)" font-size="22.00" fill="#555" stroke="#555" stroke-width="0.55" xml:space="preserve">C</text>
<text transform="matrix(0.9091 0 0 1 2298.40 283.70)" font-size="22.00" fill="#555" stroke="#555" stroke-width="0.55" xml:space="preserve">D</text>
<text transform="matrix(1.0345 0 0 1 13.69 322.00)" font-size="22.00" fill="#217346" stroke="#217346" stroke-width="0.55" xml:space="preserve">1</text>
<text transform="matrix(0.9980 0 0 1 14.10 354.00)" font-size="22.00" fill="#555" stroke="#555" stroke-width="0.55" xml:space="preserve">2</text>
<text transform="matrix(0.9564 0 0 1 14.46 386.00)" font-size="22.00" fill="#555" stroke="#555" stroke-width="0.55" xml:space="preserve">3</text>
<text transform="matrix(0.9002 0 0 1 14.80 418.00)" font-size="22.00" fill="#555" stroke="#555" stroke-width="0.55" xml:space="preserve">4</text>
<text transform="matrix(0.9665 0 0 1 14.35 450.00)" font-size="22.00" fill="#555" stroke="#555" stroke-width="0.55" xml:space="preserve">5</text>
<text transform="matrix(0.9873 0 0 1 14.11 482.00)" font-size="22.00" fill="#555" stroke="#555" stroke-width="0.55" xml:space="preserve">6</text>
<text transform="matrix(0.9980 0 0 1 14.10 514.00)" font-size="22.00" fill="#555" stroke="#555" stroke-width="0.55" xml:space="preserve">7</text>
<text transform="matrix(0.9665 0 0 1 14.35 546.00)" font-size="22.00" fill="#555" stroke="#555" stroke-width="0.55" xml:space="preserve">8</text>
<text transform="matrix(0.9873 0 0 1 14.22 578.00)" font-size="22.00" fill="#555" stroke="#555" stroke-width="0.55" xml:space="preserve">9</text>
<text transform="matrix(0.9856 0 0 1 47.30 321.70)" font-size="22.50" fill="#000" stroke="#000" stroke-width="0.5" xml:space="preserve">Specification Section</text>
<text transform="matrix(0.9560 0 0 1 266.88 321.70)" font-size="22.50" fill="#000" stroke="#000" stroke-width="0.5" xml:space="preserve">Name</text>
<text transform="matrix(0.9451 0 0 1 802.27 321.70)" font-size="22.50" fill="#000" stroke="#000" stroke-width="0.5" xml:space="preserve">Type</text>
<text transform="matrix(0.9930 0 0 1 1009.21 321.70)" font-size="22.50" fill="#000" stroke="#000" stroke-width="0.5" xml:space="preserve">Description</text>
<text transform="matrix(0.9665 0 0 1 47.54 353.70)" font-size="22.50" fill="#000" stroke="#000" stroke-width="0.5" xml:space="preserve">03 45 00</text>
<text transform="matrix(0.8553 0 0 1 268.60 353.70)" font-size="22.50" fill="#000" stroke="#000" stroke-width="0.5" xml:space="preserve">ARCHITECTURAL PRECAST CONCRETE - PLANT CAST</text>
<text transform="matrix(0.9650 0 0 1 801.72 353.70)" font-size="22.50" fill="#000" stroke="#000" stroke-width="0.5" xml:space="preserve">Shop drawings</text>
<text transform="matrix(0.9964 0 0 1 1011.00 353.70)" font-size="22.50" fill="#000" stroke="#000" stroke-width="0.5" xml:space="preserve">A. Shop Drawings:  Indicate layout, unit locations, configuration, unit identification marks, reinforcement, connection details, support items, location of lifting devices, dimensions, openings, and size</text>
<text transform="matrix(0.9665 0 0 1 47.54 385.70)" font-size="22.50" fill="#000" stroke="#000" stroke-width="0.5" xml:space="preserve">03 45 00</text>
<text transform="matrix(0.8553 0 0 1 268.60 385.70)" font-size="22.50" fill="#000" stroke="#000" stroke-width="0.5" xml:space="preserve">ARCHITECTURAL PRECAST CONCRETE - PLANT CAST</text>
<text transform="matrix(0.9751 0 0 1 801.71 385.70)" font-size="22.50" fill="#000" stroke="#000" stroke-width="0.5" xml:space="preserve">Sample</text>
<text transform="matrix(0.9894 0 0 1 1009.22 385.70)" font-size="22.50" fill="#000" stroke="#000" stroke-width="0.5" xml:space="preserve">B. Samples:  Submit two panels, 24 x 24 inch in size illustrating surface finish, color and texture.</text>
<text transform="matrix(0.9665 0 0 1 47.54 417.70)" font-size="22.50" fill="#000" stroke="#000" stroke-width="0.5" xml:space="preserve">03 45 00</text>
<text transform="matrix(0.8553 0 0 1 268.60 417.70)" font-size="22.50" fill="#000" stroke="#000" stroke-width="0.5" xml:space="preserve">ARCHITECTURAL PRECAST CONCRETE - PLANT CAST</text>
<text transform="matrix(1.0061 0 0 1 801.68 417.70)" font-size="22.50" fill="#000" stroke="#000" stroke-width="0.5" xml:space="preserve">Other</text>
<text transform="matrix(0.9712 0 0 1 1009.91 417.70)" font-size="22.50" fill="#000" stroke="#000" stroke-width="0.5" xml:space="preserve">C. Calculations:  Submit design calculations and design mix.</text>
<text transform="matrix(0.9665 0 0 1 47.54 449.70)" font-size="22.50" fill="#000" stroke="#000" stroke-width="0.5" xml:space="preserve">03 45 00</text>
<text transform="matrix(0.8553 0 0 1 268.60 449.70)" font-size="22.50" fill="#000" stroke="#000" stroke-width="0.5" xml:space="preserve">ARCHITECTURAL PRECAST CONCRETE - PLANT CAST</text>
<text transform="matrix(1.0063 0 0 1 801.68 449.70)" font-size="22.50" fill="#000" stroke="#000" stroke-width="0.5" xml:space="preserve">O&amp;M manual</text>
<text transform="matrix(0.9884 0 0 1 1009.22 449.70)" font-size="22.50" fill="#000" stroke="#000" stroke-width="0.5" xml:space="preserve">D. Maintenance Data:  Submit instructions for surface cleaning.</text>
<text transform="matrix(0.9677 0 0 1 47.54 481.70)" font-size="22.50" fill="#000" stroke="#000" stroke-width="0.5" xml:space="preserve">03 54 16</text>
<text transform="matrix(0.9012 0 0 1 266.98 481.70)" font-size="22.50" fill="#000" stroke="#000" stroke-width="0.5" xml:space="preserve">FLOOR UNDERLAYMENT</text>
<text transform="matrix(0.9637 0 0 1 800.97 481.70)" font-size="22.50" fill="#000" stroke="#000" stroke-width="0.5" xml:space="preserve">Product data</text>
<text transform="matrix(0.9926 0 0 1 1011.00 481.70)" font-size="22.50" fill="#000" stroke="#000" stroke-width="0.5" xml:space="preserve">A. Product Data:  Submit product physical characteristics, limitations and installation details.</text>
<text transform="matrix(0.9677 0 0 1 47.54 513.70)" font-size="22.50" fill="#000" stroke="#000" stroke-width="0.5" xml:space="preserve">03 54 16</text>
<text transform="matrix(0.9012 0 0 1 266.98 513.70)" font-size="22.50" fill="#000" stroke="#000" stroke-width="0.5" xml:space="preserve">FLOOR UNDERLAYMENT</text>
<text transform="matrix(1.0077 0 0 1 801.57 513.70)" font-size="22.50" fill="#000" stroke="#000" stroke-width="0.5" xml:space="preserve">Certificate</text>
<text transform="matrix(1.0004 0 0 1 1009.20 513.70)" font-size="22.50" fill="#000" stroke="#000" stroke-width="0.5" xml:space="preserve">B. Certificate:  Submit manufacturer&#39;s certification that product meets or exceeds specified requirements.</text>
<text transform="translate(920.5,91) rotate(-45)" font-size="23" font-weight="bold" fill="#333" text-anchor="middle" dominant-baseline="central">ab</text>
</svg>
</body></html>
